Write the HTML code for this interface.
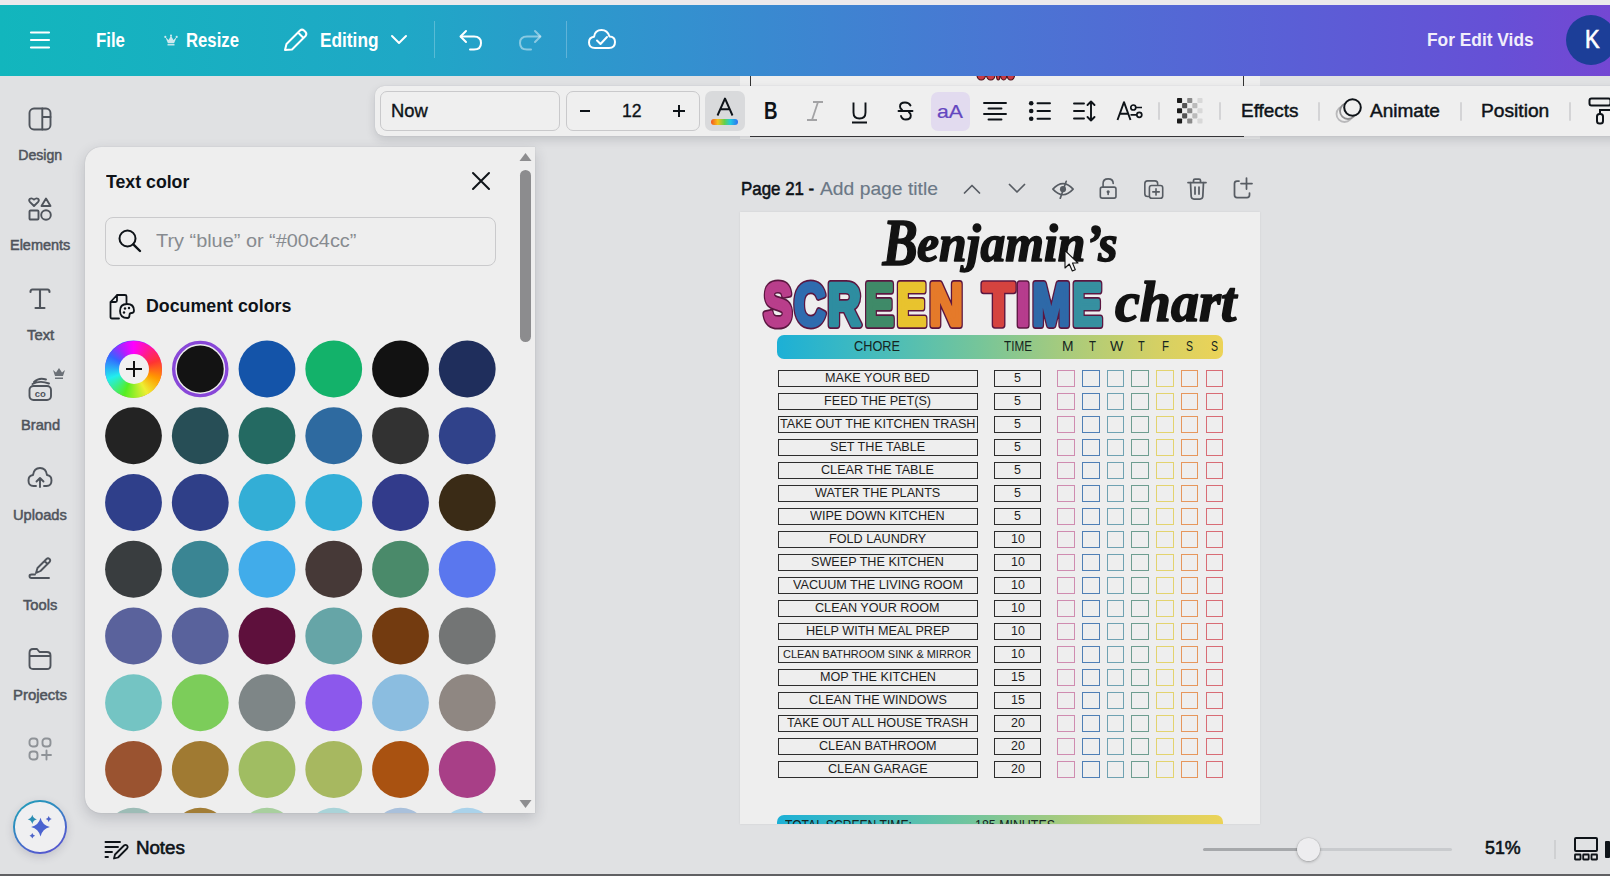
<!DOCTYPE html><html><head><meta charset="utf-8"><style>
html,body{margin:0;padding:0}
body{width:1610px;height:876px;overflow:hidden;position:relative;background:#e0e1e3;font-family:"Liberation Sans",sans-serif}
.a{position:absolute}
.t{position:absolute;white-space:pre;line-height:1;transform-origin:0 0}
</style></head><body>
<div class="a" style="left:0px;top:0px;width:1610px;height:5px;background:#ebe9ec"></div>
<div class="a" style="left:0px;top:5px;width:1610px;height:71px;background:linear-gradient(90deg,#12b6bd 0%,#1fa8c6 25%,#3391cf 42%,#4a76d3 62%,#5a5fd6 80%,#6650d6 93%,#7447d3 100%)"></div>
<svg class="a" style="left:28px;top:28px;" width="24" height="24" viewBox="0 0 24 24" fill="none"><path d="M3 4.5h18M3 12h18M3 19.5h18" stroke="#fff" stroke-width="2.2" stroke-linecap="round"/></svg>
<div class="t" style="left:96.00px;top:29.90px;font-size:20.20px;font-weight:700;color:#ffffff;transform:scaleX(0.8321);">File</div>
<svg class="a" style="left:164px;top:33.5px;" width="14" height="12.5" viewBox="0 0 14 12.5" fill="none"><g transform="scale(.875,.875)"><path d="M1.5 3.5 L4.5 10.5 H11.5 L14.5 3.5 L10.8 6.8 L8 2 L5.2 6.8 Z" fill="#cde9ee"/><rect x="4" y="11.5" width="8" height="1.6" fill="#cde9ee"/><circle cx="1.5" cy="3.3" r="1.2" fill="#cde9ee"/><circle cx="14.5" cy="3.3" r="1.2" fill="#cde9ee"/><circle cx="8" cy="1.8" r="1.2" fill="#cde9ee"/></g></svg>
<div class="t" style="left:186.00px;top:29.90px;font-size:20.20px;font-weight:700;color:#ffffff;transform:scaleX(0.8275);">Resize</div>
<svg class="a" style="left:281px;top:27px;" width="28" height="26" viewBox="0 0 28 26" fill="none"><path d="M4 23 L5.5 17 L19 3.5 Q21 1.8 23 3.5 L24.5 5 Q26.2 7 24.5 9 L11 22.5 Z M17 5.5 L22.5 11" stroke="#fff" stroke-width="2" stroke-linejoin="round"/></svg>
<div class="t" style="left:320.00px;top:29.90px;font-size:20.20px;font-weight:700;color:#ffffff;transform:scaleX(0.8556);">Editing</div>
<svg class="a" style="left:389px;top:32px;" width="20" height="14" viewBox="0 0 20 14" fill="none"><path d="M3 4 L10 11 L17 4" stroke="#fff" stroke-width="2" stroke-linecap="round" stroke-linejoin="round"/></svg>
<div class="a" style="left:434px;top:21px;width:1px;height:37px;background:rgba(255,255,255,.25)"></div>
<svg class="a" style="left:457px;top:27px;" width="28" height="26" viewBox="0 0 28 26" fill="none"><path d="M9 4 L3.5 9.5 L9 15" stroke="#fff" stroke-width="2" stroke-linecap="round" stroke-linejoin="round"/><path d="M4 9.5 H17 Q24 9.5 24 16 Q24 22.5 17 22.5 H13" stroke="#fff" stroke-width="2" stroke-linecap="round"/></svg>
<svg class="a" style="left:516px;top:27px;" width="28" height="26" viewBox="0 0 28 26" fill="none"><path d="M19 4 L24.5 9.5 L19 15" stroke="rgba(255,255,255,.45)" stroke-width="2" stroke-linecap="round" stroke-linejoin="round"/><path d="M24 9.5 H11 Q4 9.5 4 16 Q4 22.5 11 22.5 H15" stroke="rgba(255,255,255,.45)" stroke-width="2" stroke-linecap="round"/></svg>
<div class="a" style="left:566px;top:21px;width:1px;height:37px;background:rgba(255,255,255,.25)"></div>
<svg class="a" style="left:587px;top:27px;" width="30" height="24" viewBox="0 0 30 24" fill="none"><path d="M8 21 H22 Q28 21 28 15 Q28 9.5 22.5 9.5 Q20.5 3 14.5 3 Q8 3 7 9.8 Q2 10.5 2 15.5 Q2 21 8 21 Z" stroke="#fff" stroke-width="2" stroke-linejoin="round"/><path d="M10 13.5 L13.5 17 L20 10" stroke="#fff" stroke-width="2" stroke-linecap="round" stroke-linejoin="round"/></svg>
<div class="t" style="left:1427.00px;top:31.01px;font-size:18.90px;font-weight:700;color:#f1eefb;transform:scaleX(0.9182);">For Edit Vids</div>
<div class="a" style="left:1566px;top:15px;width:50px;height:50px;border-radius:50%;background:#1c3e98"></div>
<div class="t" style="left:1584.50px;top:26.97px;font-size:25.44px;font-weight:400;color:#ffffff;transform:scaleX(0.8572);-webkit-text-stroke:.7px #fff;">K</div>
<div class="t" style="left:18.30px;top:148.37px;font-size:14.10px;font-weight:400;color:#4f545c;-webkit-text-stroke:.5px #4f545c;">Design</div>
<div class="t" style="left:10.00px;top:238.37px;font-size:14.10px;font-weight:400;color:#4f545c;transform:scaleX(1.0256);-webkit-text-stroke:.5px #4f545c;">Elements</div>
<div class="t" style="left:26.60px;top:328.37px;font-size:14.10px;font-weight:400;color:#4f545c;transform:scaleX(1.0514);-webkit-text-stroke:.5px #4f545c;">Text</div>
<div class="t" style="left:20.80px;top:418.37px;font-size:14.10px;font-weight:400;color:#4f545c;transform:scaleX(1.0413);-webkit-text-stroke:.5px #4f545c;">Brand</div>
<div class="t" style="left:13.20px;top:508.37px;font-size:14.10px;font-weight:400;color:#4f545c;transform:scaleX(1.0417);-webkit-text-stroke:.5px #4f545c;">Uploads</div>
<div class="t" style="left:23.00px;top:598.37px;font-size:14.10px;font-weight:400;color:#4f545c;transform:scaleX(1.0419);-webkit-text-stroke:.5px #4f545c;">Tools</div>
<div class="t" style="left:13.40px;top:688.37px;font-size:14.10px;font-weight:400;color:#4f545c;transform:scaleX(1.0590);-webkit-text-stroke:.5px #4f545c;">Projects</div>
<svg class="a" style="left:28px;top:107px;" width="24" height="24" viewBox="0 0 24 24" fill="none"><rect x="1.5" y="1.5" width="21" height="21" rx="4.5" stroke="#4f545c" stroke-width="1.9" stroke-linecap="round" stroke-linejoin="round"/><path d="M14.3 1.5 V22.5 M14.3 10 H22.5" stroke="#4f545c" stroke-width="1.9" stroke-linecap="round" stroke-linejoin="round"/></svg>
<svg class="a" style="left:28px;top:197px;" width="24" height="25" viewBox="0 0 24 25" fill="none"><path d="M6 9 L1.8 4.8 Q0.5 3 2 1.8 Q3.8 0.6 6 2.6 Q8.2 0.6 10 1.8 Q11.5 3 10.2 4.8 Z" stroke="#4f545c" stroke-width="1.9" stroke-linecap="round" stroke-linejoin="round"/><path d="M18 1.5 L22.5 9 H13.5 Z" stroke="#4f545c" stroke-width="1.9" stroke-linecap="round" stroke-linejoin="round"/><rect x="1.5" y="13.5" width="9" height="9" rx="1" stroke="#4f545c" stroke-width="1.9" stroke-linecap="round" stroke-linejoin="round"/><circle cx="18" cy="18" r="4.8" stroke="#4f545c" stroke-width="1.9" stroke-linecap="round" stroke-linejoin="round"/></svg>
<svg class="a" style="left:28px;top:287px;" width="24" height="24" viewBox="0 0 24 24" fill="none"><path d="M2.5 5 Q2.5 2.5 4.5 2.5 H19.5 Q21.5 2.5 21.5 5 M12 2.5 V21 M7.5 21 H16.5" stroke="#4f545c" stroke-width="2.1" stroke-linecap="round"/></svg>
<svg class="a" style="left:27px;top:366px;" width="40" height="36" viewBox="0 0 40 36" fill="none"><rect x="2.5" y="20" width="21.5" height="14" rx="4" stroke="#4f545c" stroke-width="1.9" stroke-linecap="round" stroke-linejoin="round"/><path d="M7 16 Q12 11 19 13.5 M5.5 18 Q13 14 22 17.5" stroke="#4f545c" stroke-width="1.9" stroke-linecap="round" stroke-linejoin="round"/><text x="13.2" y="31" font-family="Liberation Sans" font-weight="700" font-size="9.5" fill="#4f545c" text-anchor="middle">co</text><path d="M26 4 L28 10 H36 L38 4 L35 6.5 L32 2 L29 6.5 Z" fill="#6b7077"/><rect x="28" y="11.5" width="8" height="1.5" fill="#6b7077"/></svg>
<svg class="a" style="left:27px;top:466px;" width="26" height="24" viewBox="0 0 26 24" fill="none"><path d="M9 20 H6.5 Q1.5 20 1.5 14.5 Q1.5 9.5 6 9 Q7 2 13 2 Q19 2 20 9 Q24.5 9.5 24.5 14.5 Q24.5 20 19.5 20 H17" stroke="#4f545c" stroke-width="1.9" stroke-linecap="round" stroke-linejoin="round"/><path d="M13 21 V12 M9.5 15.5 L13 12 L16.5 15.5" stroke="#4f545c" stroke-width="1.9" stroke-linecap="round" stroke-linejoin="round"/></svg>
<svg class="a" style="left:28px;top:556px;" width="24" height="25" viewBox="0 0 24 25" fill="none"><path d="M8 17 L9.5 12 L18.5 3 Q20 1.7 21.5 3 Q22.9 4.5 21.5 6 L12.5 15 Z M16.5 5 L19.5 8" stroke="#4f545c" stroke-width="1.9" stroke-linecap="round" stroke-linejoin="round"/><path d="M7 18.5 H3.5 Q1.5 18.5 1.5 20 Q1.5 22 3.5 22 H21" stroke="#4f545c" stroke-width="1.9" stroke-linecap="round" stroke-linejoin="round"/></svg>
<svg class="a" style="left:28px;top:647px;" width="24" height="24" viewBox="0 0 24 24" fill="none"><path d="M1.5 6 Q1.5 2 5 2 H9 L11.5 5 H19 Q22.5 5 22.5 8.5 V18.5 Q22.5 22 19 22 H5 Q1.5 22 1.5 18.5 Z M1.5 9 H22.5" stroke="#4f545c" stroke-width="1.9" stroke-linecap="round" stroke-linejoin="round"/></svg>
<svg class="a" style="left:28px;top:737px;" width="24" height="24" viewBox="0 0 24 24" fill="none"><rect x="1.5" y="1.5" width="8" height="8" rx="3" stroke="#8e9297" stroke-width="1.9" stroke-linecap="round"/><rect x="14.5" y="1.5" width="8" height="8" rx="3" stroke="#8e9297" stroke-width="1.9" stroke-linecap="round"/><rect x="1.5" y="14.5" width="8" height="8" rx="3" stroke="#8e9297" stroke-width="1.9" stroke-linecap="round"/><path d="M18.5 13.5 V22.5 M14 18 H23" stroke="#8e9297" stroke-width="1.9" stroke-linecap="round"/></svg>
<div class="a" style="left:13px;top:800px;width:54px;height:54px;border-radius:50%;background:linear-gradient(150deg,#1f9fb8 0%,#2f8bc0 35%,#4a66cc 65%,#5b4fd0 100%);box-shadow:0 3px 9px rgba(60,60,90,.18)"></div>
<div class="a" style="left:15.2px;top:802.2px;width:49.6px;height:49.6px;border-radius:50%;background:#efeff1"></div>
<svg class="a" style="left:25px;top:812px;" width="31" height="31" viewBox="0 0 31 31" fill="none"><path d="M15.5 5.699999999999999 Q17.38 13.219999999999999 24.9 15.1 Q17.38 16.98 15.5 24.5 Q13.62 16.98 6.1 15.1 Q13.62 13.219999999999999 15.5 5.699999999999999 Z" fill="#4a62d0"/><path d="M7.3 2.7 Q8.219999999999999 6.38 11.899999999999999 7.3 Q8.219999999999999 8.219999999999999 7.3 11.899999999999999 Q6.38 8.219999999999999 2.7 7.3 Q6.38 6.38 7.3 2.7 Z" fill="#2a8db3"/><path d="M23.7 3.9000000000000004 Q24.3 6.300000000000001 26.7 6.9 Q24.3 7.5 23.7 9.9 Q23.099999999999998 7.5 20.7 6.9 Q23.099999999999998 6.300000000000001 23.7 3.9000000000000004 Z" fill="#4d63c9"/><path d="M7.3 20.9 Q7.859999999999999 23.14 10.1 23.7 Q7.859999999999999 24.259999999999998 7.3 26.5 Q6.74 24.259999999999998 4.5 23.7 Q6.74 23.14 7.3 20.9 Z" fill="#4d63c9"/></svg>
<div class="a" style="left:740px;top:76px;width:520px;height:63px;background:#eeeeee"></div>
<div class="a" style="left:750px;top:76px;width:1.2px;height:60px;background:#333"></div>
<div class="a" style="left:1242.8px;top:76px;width:1.2px;height:60px;background:#333"></div>
<div class="a" style="left:750px;top:136px;width:493.5px;height:1px;background:#3a3a3a"></div>
<svg class="a" style="left:970px;top:76px" width="50" height="6" viewBox="0 0 50 6"><ellipse cx="11.25" cy="-1" rx="4.25" ry="5" fill="#c93a44" stroke="#4a1018" stroke-width="1.2"/><ellipse cx="20.75" cy="-1" rx="4.25" ry="5" fill="#c93a44" stroke="#4a1018" stroke-width="1.2"/><ellipse cx="28.25" cy="-1" rx="1.75" ry="5" fill="#c93a44" stroke="#4a1018" stroke-width="1.2"/><ellipse cx="33.65" cy="-1" rx="3.15" ry="5" fill="#c93a44" stroke="#4a1018" stroke-width="1.2"/><ellipse cx="40.75" cy="-1" rx="3.75" ry="5" fill="#c93a44" stroke="#4a1018" stroke-width="1.2"/></svg>
<div class="t" style="left:741.20px;top:181.47px;font-size:17.88px;font-weight:400;color:#0e1318;transform:scaleX(0.9458);-webkit-text-stroke:.55px #0e1318;">Page 21 -</div>
<div class="t" style="left:820.00px;top:181.47px;font-size:17.88px;font-weight:400;color:#6b7886;transform:scaleX(1.0794);-webkit-text-stroke:.15px #6b7886;">Add page title</div>
<svg class="a" style="left:962px;top:182px;" width="20" height="14" viewBox="0 0 20 14" fill="none"><path d="M2.5 11 L10 3.5 L17.5 11" stroke="#575c63" stroke-width="1.75" stroke-linecap="round" stroke-linejoin="round"/></svg>
<svg class="a" style="left:1007px;top:181px;" width="20" height="14" viewBox="0 0 20 14" fill="none"><path d="M2.5 3.5 L10 11 L17.5 3.5" stroke="#575c63" stroke-width="1.75" stroke-linecap="round" stroke-linejoin="round"/></svg>
<svg class="a" style="left:1051px;top:179px;" width="24" height="20.3" viewBox="0 0 26 22" fill="none"><path d="M2 11 Q13 -1 24 11 Q13 23 2 11 Z" stroke="#575c63" stroke-width="1.75" stroke-linecap="round" stroke-linejoin="round"/><circle cx="13" cy="11" r="3.3" fill="#575c63"/><path d="M16.5 2.5 L10 21" stroke="#575c63" stroke-width="1.75" stroke-linecap="round" stroke-linejoin="round"/></svg>
<svg class="a" style="left:1098px;top:177px;" width="20.3" height="23" viewBox="0 0 22 25" fill="none"><rect x="2.5" y="11" width="17" height="12" rx="2" stroke="#575c63" stroke-width="1.75" stroke-linecap="round" stroke-linejoin="round"/><path d="M5.5 11 V7 Q5.5 2 11 2 Q16.5 2 16.5 7" stroke="#575c63" stroke-width="1.75" stroke-linecap="round" stroke-linejoin="round"/><circle cx="11" cy="16" r="1.7" fill="#575c63"/><path d="M11 16 V19" stroke="#575c63" stroke-width="1.75" stroke-linecap="round" stroke-linejoin="round"/></svg>
<svg class="a" style="left:1142.5px;top:179px;" width="22" height="21.2" viewBox="0 0 24 23" fill="none"><path d="M6 19 H5 Q2 19 2 16 V5 Q2 2 5 2 H13 Q16 2 16 5 V6" stroke="#575c63" stroke-width="1.75" stroke-linecap="round" stroke-linejoin="round"/><rect x="7" y="7" width="14.5" height="14" rx="2.5" stroke="#575c63" stroke-width="1.75" stroke-linecap="round" stroke-linejoin="round"/><path d="M14.2 10.5 V17.5 M10.7 14 H17.7" stroke="#575c63" stroke-width="1.75" stroke-linecap="round" stroke-linejoin="round"/></svg>
<svg class="a" style="left:1186px;top:177px;" width="22" height="24" viewBox="0 0 22 24" fill="none"><path d="M2 5.5 H20 M7.5 5.5 V3.5 Q7.5 2 9 2 H13 Q14.5 2 14.5 3.5 V5.5 M4.5 5.5 L5.2 19.5 Q5.5 22 8 22 H14 Q16.5 22 16.8 19.5 L17.5 5.5 M9 10 V17 M13 10 V17" stroke="#575c63" stroke-width="1.75" stroke-linecap="round" stroke-linejoin="round"/></svg>
<svg class="a" style="left:1232px;top:176px;" width="22" height="24" viewBox="0 0 22 24" fill="none"><path d="M7 5 H5 Q2.5 5 2.5 7.5 V19 Q2.5 21.5 5 21.5 H15 Q17.5 21.5 17.5 19 V17 M14.5 2 V13 M9 7.5 H20" stroke="#575c63" stroke-width="1.75" stroke-linecap="round" stroke-linejoin="round"/></svg>
<div class="a" style="left:740px;top:212px;width:520px;height:611.5px;background:#eeeeee;box-shadow:0 0 2px rgba(0,0,0,.08)"></div>
<svg class="a" style="left:0;top:0" width="1300" height="340" viewBox="0 0 1300 340"><text transform="translate(882.5,265) scale(0.77,1)" font-family="Liberation Serif" font-style="italic" font-weight="700" fill="#121212" stroke="#121212" stroke-width="1.6" stroke-linejoin="round" font-size="68.7">B</text><text transform="translate(917,260.5) scale(0.95,1)" font-family="Liberation Serif" font-style="italic" font-weight="700" fill="#121212" stroke="#121212" stroke-width="1.6" stroke-linejoin="round" font-size="52.3">enjamin’s</text><text transform="translate(1115,321) scale(0.99,1)" font-family="Liberation Serif" font-style="italic" font-weight="700" fill="#121212" stroke="#121212" stroke-width="1.6" stroke-linejoin="round" font-size="56.6">chart</text></svg>
<svg class="a" style="left:750px;top:0px" width="380" height="340" viewBox="0 0 380 340"><text transform="translate(14.00,325.00) scale(0.702,1)" font-family="Liberation Sans" font-weight="700" font-size="59.6" fill="#b93e8b" stroke="#5b1640" stroke-width="7.0" vector-effect="non-scaling-stroke" stroke-linejoin="round">S</text><text transform="translate(14.00,325.00) scale(0.702,1)" font-family="Liberation Sans" font-weight="700" font-size="59.6" fill="#b93e8b" stroke="#b93e8b" stroke-width="4.0" vector-effect="non-scaling-stroke" stroke-linejoin="round">S</text><text transform="translate(44.20,325.00) scale(0.722,1)" font-family="Liberation Sans" font-weight="700" font-size="59.6" fill="#2f6caf" stroke="#5b1640" stroke-width="7.0" vector-effect="non-scaling-stroke" stroke-linejoin="round">C</text><text transform="translate(44.20,325.00) scale(0.722,1)" font-family="Liberation Sans" font-weight="700" font-size="59.6" fill="#2f6caf" stroke="#2f6caf" stroke-width="4.0" vector-effect="non-scaling-stroke" stroke-linejoin="round">C</text><text transform="translate(77.60,325.00) scale(0.774,1)" font-family="Liberation Sans" font-weight="700" font-size="59.6" fill="#2e8da0" stroke="#5b1640" stroke-width="7.0" vector-effect="non-scaling-stroke" stroke-linejoin="round">R</text><text transform="translate(77.60,325.00) scale(0.774,1)" font-family="Liberation Sans" font-weight="700" font-size="59.6" fill="#2e8da0" stroke="#2e8da0" stroke-width="4.0" vector-effect="non-scaling-stroke" stroke-linejoin="round">R</text><text transform="translate(114.90,325.00) scale(0.722,1)" font-family="Liberation Sans" font-weight="700" font-size="59.6" fill="#3f8a68" stroke="#5b1640" stroke-width="7.0" vector-effect="non-scaling-stroke" stroke-linejoin="round">E</text><text transform="translate(114.90,325.00) scale(0.722,1)" font-family="Liberation Sans" font-weight="700" font-size="59.6" fill="#3f8a68" stroke="#3f8a68" stroke-width="4.0" vector-effect="non-scaling-stroke" stroke-linejoin="round">E</text><text transform="translate(146.70,325.00) scale(0.744,1)" font-family="Liberation Sans" font-weight="700" font-size="59.6" fill="#e8c32e" stroke="#5b1640" stroke-width="7.0" vector-effect="non-scaling-stroke" stroke-linejoin="round">E</text><text transform="translate(146.70,325.00) scale(0.744,1)" font-family="Liberation Sans" font-weight="700" font-size="59.6" fill="#e8c32e" stroke="#e8c32e" stroke-width="4.0" vector-effect="non-scaling-stroke" stroke-linejoin="round">E</text><text transform="translate(179.20,325.00) scale(0.783,1)" font-family="Liberation Sans" font-weight="700" font-size="59.6" fill="#e57a2a" stroke="#5b1640" stroke-width="7.0" vector-effect="non-scaling-stroke" stroke-linejoin="round">N</text><text transform="translate(179.20,325.00) scale(0.783,1)" font-family="Liberation Sans" font-weight="700" font-size="59.6" fill="#e57a2a" stroke="#e57a2a" stroke-width="4.0" vector-effect="non-scaling-stroke" stroke-linejoin="round">N</text><text transform="translate(232.90,325.00) scale(0.856,1)" font-family="Liberation Sans" font-weight="700" font-size="59.6" fill="#d5433f" stroke="#5b1640" stroke-width="7.0" vector-effect="non-scaling-stroke" stroke-linejoin="round">T</text><text transform="translate(232.90,325.00) scale(0.856,1)" font-family="Liberation Sans" font-weight="700" font-size="59.6" fill="#d5433f" stroke="#d5433f" stroke-width="4.0" vector-effect="non-scaling-stroke" stroke-linejoin="round">T</text><text transform="translate(266.40,325.00) scale(0.803,1)" font-family="Liberation Sans" font-weight="700" font-size="59.6" fill="#b63c8d" stroke="#5b1640" stroke-width="7.0" vector-effect="non-scaling-stroke" stroke-linejoin="round">I</text><text transform="translate(266.40,325.00) scale(0.803,1)" font-family="Liberation Sans" font-weight="700" font-size="59.6" fill="#b63c8d" stroke="#b63c8d" stroke-width="4.0" vector-effect="non-scaling-stroke" stroke-linejoin="round">I</text><text transform="translate(282.20,325.00) scale(0.764,1)" font-family="Liberation Sans" font-weight="700" font-size="59.6" fill="#2e69a8" stroke="#5b1640" stroke-width="7.0" vector-effect="non-scaling-stroke" stroke-linejoin="round">M</text><text transform="translate(282.20,325.00) scale(0.764,1)" font-family="Liberation Sans" font-weight="700" font-size="59.6" fill="#2e69a8" stroke="#2e69a8" stroke-width="4.0" vector-effect="non-scaling-stroke" stroke-linejoin="round">M</text><text transform="translate(322.60,325.00) scale(0.744,1)" font-family="Liberation Sans" font-weight="700" font-size="59.6" fill="#3690a0" stroke="#5b1640" stroke-width="7.0" vector-effect="non-scaling-stroke" stroke-linejoin="round">E</text><text transform="translate(322.60,325.00) scale(0.744,1)" font-family="Liberation Sans" font-weight="700" font-size="59.6" fill="#3690a0" stroke="#3690a0" stroke-width="4.0" vector-effect="non-scaling-stroke" stroke-linejoin="round">E</text></svg>
<div class="a" style="left:776.5px;top:335px;width:446.5px;height:23.5px;background:linear-gradient(90deg,#1cb0d6 0%,#4bbdb8 25%,#75c59a 45%,#a8cb7c 65%,#d4d064 85%,#ecd357 100%);border-radius:7px"></div>
<div class="t" style="left:854.00px;top:340.19px;font-size:13.95px;font-weight:400;color:#15251f;transform:scaleX(0.9132);">CHORE</div>
<div class="t" style="left:1004.00px;top:340.19px;font-size:13.95px;font-weight:400;color:#15251f;transform:scaleX(0.8396);">TIME</div>
<div class="t" style="left:1061.50px;top:340.19px;font-size:13.95px;font-weight:400;color:#15251f;transform:scaleX(0.9870);">M</div>
<div class="t" style="left:1088.70px;top:340.19px;font-size:13.95px;font-weight:400;color:#15251f;transform:scaleX(0.8224);">T</div>
<div class="t" style="left:1109.70px;top:340.19px;font-size:13.95px;font-weight:400;color:#15251f;transform:scaleX(1.0086);">W</div>
<div class="t" style="left:1137.60px;top:340.19px;font-size:13.95px;font-weight:400;color:#15251f;transform:scaleX(0.7872);">T</div>
<div class="t" style="left:1161.70px;top:340.19px;font-size:13.95px;font-weight:400;color:#15251f;transform:scaleX(0.8224);">F</div>
<div class="t" style="left:1185.70px;top:340.19px;font-size:13.95px;font-weight:400;color:#15251f;transform:scaleX(0.7544);">S</div>
<div class="t" style="left:1210.60px;top:340.19px;font-size:13.95px;font-weight:400;color:#15251f;transform:scaleX(0.7544);">S</div>
<div class="a" style="left:777.6px;top:369.5px;width:200.7px;height:17.2px;border:1.7px solid #2d2d2d;box-sizing:border-box"></div>
<div class="a" style="left:994px;top:369.5px;width:47px;height:17.2px;border:1.7px solid #2d2d2d;box-sizing:border-box"></div>
<div class="t" style="left:825.02px;top:371.03px;font-size:13.08px;font-weight:400;color:#1d1d1d;transform:scaleX(0.9650);">MAKE YOUR BED</div>
<div class="t" style="left:1014.05px;top:371.03px;font-size:13.08px;font-weight:400;color:#1d1d1d;transform:scaleX(0.9514);">5</div>
<div class="a" style="left:1057.3px;top:369.5px;width:17.5px;height:17.5px;border:1.6px solid #cf8cb0;box-sizing:border-box"></div>
<div class="a" style="left:1082.0px;top:369.5px;width:17.5px;height:17.5px;border:1.6px solid #4f7fb5;box-sizing:border-box"></div>
<div class="a" style="left:1106.7px;top:369.5px;width:17.5px;height:17.5px;border:1.6px solid #6fa2b2;box-sizing:border-box"></div>
<div class="a" style="left:1131.4px;top:369.5px;width:17.5px;height:17.5px;border:1.6px solid #6e9d90;box-sizing:border-box"></div>
<div class="a" style="left:1156.1px;top:369.5px;width:17.5px;height:17.5px;border:1.6px solid #e3d36e;box-sizing:border-box"></div>
<div class="a" style="left:1180.8px;top:369.5px;width:17.5px;height:17.5px;border:1.6px solid #e6975c;box-sizing:border-box"></div>
<div class="a" style="left:1205.5px;top:369.5px;width:17.5px;height:17.5px;border:1.6px solid #d86c75;box-sizing:border-box"></div>
<div class="a" style="left:777.6px;top:392.5px;width:200.7px;height:17.2px;border:1.7px solid #2d2d2d;box-sizing:border-box"></div>
<div class="a" style="left:994px;top:392.5px;width:47px;height:17.2px;border:1.7px solid #2d2d2d;box-sizing:border-box"></div>
<div class="t" style="left:823.94px;top:394.03px;font-size:13.08px;font-weight:400;color:#1d1d1d;transform:scaleX(0.9650);">FEED THE PET(S)</div>
<div class="t" style="left:1014.05px;top:394.03px;font-size:13.08px;font-weight:400;color:#1d1d1d;transform:scaleX(0.9514);">5</div>
<div class="a" style="left:1057.3px;top:392.5px;width:17.5px;height:17.5px;border:1.6px solid #cf8cb0;box-sizing:border-box"></div>
<div class="a" style="left:1082.0px;top:392.5px;width:17.5px;height:17.5px;border:1.6px solid #4f7fb5;box-sizing:border-box"></div>
<div class="a" style="left:1106.7px;top:392.5px;width:17.5px;height:17.5px;border:1.6px solid #6fa2b2;box-sizing:border-box"></div>
<div class="a" style="left:1131.4px;top:392.5px;width:17.5px;height:17.5px;border:1.6px solid #6e9d90;box-sizing:border-box"></div>
<div class="a" style="left:1156.1px;top:392.5px;width:17.5px;height:17.5px;border:1.6px solid #e3d36e;box-sizing:border-box"></div>
<div class="a" style="left:1180.8px;top:392.5px;width:17.5px;height:17.5px;border:1.6px solid #e6975c;box-sizing:border-box"></div>
<div class="a" style="left:1205.5px;top:392.5px;width:17.5px;height:17.5px;border:1.6px solid #d86c75;box-sizing:border-box"></div>
<div class="a" style="left:777.6px;top:415.5px;width:200.7px;height:17.2px;border:1.7px solid #2d2d2d;box-sizing:border-box"></div>
<div class="a" style="left:994px;top:415.5px;width:47px;height:17.2px;border:1.7px solid #2d2d2d;box-sizing:border-box"></div>
<div class="t" style="left:779.76px;top:417.03px;font-size:13.08px;font-weight:400;color:#1d1d1d;transform:scaleX(0.9650);">TAKE OUT THE KITCHEN TRASH</div>
<div class="t" style="left:1014.05px;top:417.03px;font-size:13.08px;font-weight:400;color:#1d1d1d;transform:scaleX(0.9514);">5</div>
<div class="a" style="left:1057.3px;top:415.5px;width:17.5px;height:17.5px;border:1.6px solid #cf8cb0;box-sizing:border-box"></div>
<div class="a" style="left:1082.0px;top:415.5px;width:17.5px;height:17.5px;border:1.6px solid #4f7fb5;box-sizing:border-box"></div>
<div class="a" style="left:1106.7px;top:415.5px;width:17.5px;height:17.5px;border:1.6px solid #6fa2b2;box-sizing:border-box"></div>
<div class="a" style="left:1131.4px;top:415.5px;width:17.5px;height:17.5px;border:1.6px solid #6e9d90;box-sizing:border-box"></div>
<div class="a" style="left:1156.1px;top:415.5px;width:17.5px;height:17.5px;border:1.6px solid #e3d36e;box-sizing:border-box"></div>
<div class="a" style="left:1180.8px;top:415.5px;width:17.5px;height:17.5px;border:1.6px solid #e6975c;box-sizing:border-box"></div>
<div class="a" style="left:1205.5px;top:415.5px;width:17.5px;height:17.5px;border:1.6px solid #d86c75;box-sizing:border-box"></div>
<div class="a" style="left:777.6px;top:438.5px;width:200.7px;height:17.2px;border:1.7px solid #2d2d2d;box-sizing:border-box"></div>
<div class="a" style="left:994px;top:438.5px;width:47px;height:17.2px;border:1.7px solid #2d2d2d;box-sizing:border-box"></div>
<div class="t" style="left:829.91px;top:440.03px;font-size:13.08px;font-weight:400;color:#1d1d1d;transform:scaleX(0.9650);">SET THE TABLE</div>
<div class="t" style="left:1014.05px;top:440.03px;font-size:13.08px;font-weight:400;color:#1d1d1d;transform:scaleX(0.9514);">5</div>
<div class="a" style="left:1057.3px;top:438.5px;width:17.5px;height:17.5px;border:1.6px solid #cf8cb0;box-sizing:border-box"></div>
<div class="a" style="left:1082.0px;top:438.5px;width:17.5px;height:17.5px;border:1.6px solid #4f7fb5;box-sizing:border-box"></div>
<div class="a" style="left:1106.7px;top:438.5px;width:17.5px;height:17.5px;border:1.6px solid #6fa2b2;box-sizing:border-box"></div>
<div class="a" style="left:1131.4px;top:438.5px;width:17.5px;height:17.5px;border:1.6px solid #6e9d90;box-sizing:border-box"></div>
<div class="a" style="left:1156.1px;top:438.5px;width:17.5px;height:17.5px;border:1.6px solid #e3d36e;box-sizing:border-box"></div>
<div class="a" style="left:1180.8px;top:438.5px;width:17.5px;height:17.5px;border:1.6px solid #e6975c;box-sizing:border-box"></div>
<div class="a" style="left:1205.5px;top:438.5px;width:17.5px;height:17.5px;border:1.6px solid #d86c75;box-sizing:border-box"></div>
<div class="a" style="left:777.6px;top:461.5px;width:200.7px;height:17.2px;border:1.7px solid #2d2d2d;box-sizing:border-box"></div>
<div class="a" style="left:994px;top:461.5px;width:47px;height:17.2px;border:1.7px solid #2d2d2d;box-sizing:border-box"></div>
<div class="t" style="left:821.01px;top:463.03px;font-size:13.08px;font-weight:400;color:#1d1d1d;transform:scaleX(0.9650);">CLEAR THE TABLE</div>
<div class="t" style="left:1014.05px;top:463.03px;font-size:13.08px;font-weight:400;color:#1d1d1d;transform:scaleX(0.9514);">5</div>
<div class="a" style="left:1057.3px;top:461.5px;width:17.5px;height:17.5px;border:1.6px solid #cf8cb0;box-sizing:border-box"></div>
<div class="a" style="left:1082.0px;top:461.5px;width:17.5px;height:17.5px;border:1.6px solid #4f7fb5;box-sizing:border-box"></div>
<div class="a" style="left:1106.7px;top:461.5px;width:17.5px;height:17.5px;border:1.6px solid #6fa2b2;box-sizing:border-box"></div>
<div class="a" style="left:1131.4px;top:461.5px;width:17.5px;height:17.5px;border:1.6px solid #6e9d90;box-sizing:border-box"></div>
<div class="a" style="left:1156.1px;top:461.5px;width:17.5px;height:17.5px;border:1.6px solid #e3d36e;box-sizing:border-box"></div>
<div class="a" style="left:1180.8px;top:461.5px;width:17.5px;height:17.5px;border:1.6px solid #e6975c;box-sizing:border-box"></div>
<div class="a" style="left:1205.5px;top:461.5px;width:17.5px;height:17.5px;border:1.6px solid #d86c75;box-sizing:border-box"></div>
<div class="a" style="left:777.6px;top:484.5px;width:200.7px;height:17.2px;border:1.7px solid #2d2d2d;box-sizing:border-box"></div>
<div class="a" style="left:994px;top:484.5px;width:47px;height:17.2px;border:1.7px solid #2d2d2d;box-sizing:border-box"></div>
<div class="t" style="left:814.82px;top:486.03px;font-size:13.08px;font-weight:400;color:#1d1d1d;transform:scaleX(0.9650);">WATER THE PLANTS</div>
<div class="t" style="left:1014.05px;top:486.03px;font-size:13.08px;font-weight:400;color:#1d1d1d;transform:scaleX(0.9514);">5</div>
<div class="a" style="left:1057.3px;top:484.5px;width:17.5px;height:17.5px;border:1.6px solid #cf8cb0;box-sizing:border-box"></div>
<div class="a" style="left:1082.0px;top:484.5px;width:17.5px;height:17.5px;border:1.6px solid #4f7fb5;box-sizing:border-box"></div>
<div class="a" style="left:1106.7px;top:484.5px;width:17.5px;height:17.5px;border:1.6px solid #6fa2b2;box-sizing:border-box"></div>
<div class="a" style="left:1131.4px;top:484.5px;width:17.5px;height:17.5px;border:1.6px solid #6e9d90;box-sizing:border-box"></div>
<div class="a" style="left:1156.1px;top:484.5px;width:17.5px;height:17.5px;border:1.6px solid #e3d36e;box-sizing:border-box"></div>
<div class="a" style="left:1180.8px;top:484.5px;width:17.5px;height:17.5px;border:1.6px solid #e6975c;box-sizing:border-box"></div>
<div class="a" style="left:1205.5px;top:484.5px;width:17.5px;height:17.5px;border:1.6px solid #d86c75;box-sizing:border-box"></div>
<div class="a" style="left:777.6px;top:507.5px;width:200.7px;height:17.2px;border:1.7px solid #2d2d2d;box-sizing:border-box"></div>
<div class="a" style="left:994px;top:507.5px;width:47px;height:17.2px;border:1.7px solid #2d2d2d;box-sizing:border-box"></div>
<div class="t" style="left:810.18px;top:509.03px;font-size:13.08px;font-weight:400;color:#1d1d1d;transform:scaleX(0.9650);">WIPE DOWN KITCHEN</div>
<div class="t" style="left:1014.05px;top:509.03px;font-size:13.08px;font-weight:400;color:#1d1d1d;transform:scaleX(0.9514);">5</div>
<div class="a" style="left:1057.3px;top:507.5px;width:17.5px;height:17.5px;border:1.6px solid #cf8cb0;box-sizing:border-box"></div>
<div class="a" style="left:1082.0px;top:507.5px;width:17.5px;height:17.5px;border:1.6px solid #4f7fb5;box-sizing:border-box"></div>
<div class="a" style="left:1106.7px;top:507.5px;width:17.5px;height:17.5px;border:1.6px solid #6fa2b2;box-sizing:border-box"></div>
<div class="a" style="left:1131.4px;top:507.5px;width:17.5px;height:17.5px;border:1.6px solid #6e9d90;box-sizing:border-box"></div>
<div class="a" style="left:1156.1px;top:507.5px;width:17.5px;height:17.5px;border:1.6px solid #e3d36e;box-sizing:border-box"></div>
<div class="a" style="left:1180.8px;top:507.5px;width:17.5px;height:17.5px;border:1.6px solid #e6975c;box-sizing:border-box"></div>
<div class="a" style="left:1205.5px;top:507.5px;width:17.5px;height:17.5px;border:1.6px solid #d86c75;box-sizing:border-box"></div>
<div class="a" style="left:777.6px;top:530.5px;width:200.7px;height:17.2px;border:1.7px solid #2d2d2d;box-sizing:border-box"></div>
<div class="a" style="left:994px;top:530.5px;width:47px;height:17.2px;border:1.7px solid #2d2d2d;box-sizing:border-box"></div>
<div class="t" style="left:828.87px;top:532.03px;font-size:13.08px;font-weight:400;color:#1d1d1d;transform:scaleX(0.9650);">FOLD LAUNDRY</div>
<div class="t" style="left:1010.59px;top:532.03px;font-size:13.08px;font-weight:400;color:#1d1d1d;transform:scaleX(0.9514);">10</div>
<div class="a" style="left:1057.3px;top:530.5px;width:17.5px;height:17.5px;border:1.6px solid #cf8cb0;box-sizing:border-box"></div>
<div class="a" style="left:1082.0px;top:530.5px;width:17.5px;height:17.5px;border:1.6px solid #4f7fb5;box-sizing:border-box"></div>
<div class="a" style="left:1106.7px;top:530.5px;width:17.5px;height:17.5px;border:1.6px solid #6fa2b2;box-sizing:border-box"></div>
<div class="a" style="left:1131.4px;top:530.5px;width:17.5px;height:17.5px;border:1.6px solid #6e9d90;box-sizing:border-box"></div>
<div class="a" style="left:1156.1px;top:530.5px;width:17.5px;height:17.5px;border:1.6px solid #e3d36e;box-sizing:border-box"></div>
<div class="a" style="left:1180.8px;top:530.5px;width:17.5px;height:17.5px;border:1.6px solid #e6975c;box-sizing:border-box"></div>
<div class="a" style="left:1205.5px;top:530.5px;width:17.5px;height:17.5px;border:1.6px solid #d86c75;box-sizing:border-box"></div>
<div class="a" style="left:777.6px;top:553.5px;width:200.7px;height:17.2px;border:1.7px solid #2d2d2d;box-sizing:border-box"></div>
<div class="a" style="left:994px;top:553.5px;width:47px;height:17.2px;border:1.7px solid #2d2d2d;box-sizing:border-box"></div>
<div class="t" style="left:811.10px;top:555.03px;font-size:13.08px;font-weight:400;color:#1d1d1d;transform:scaleX(0.9650);">SWEEP THE KITCHEN</div>
<div class="t" style="left:1010.59px;top:555.03px;font-size:13.08px;font-weight:400;color:#1d1d1d;transform:scaleX(0.9514);">10</div>
<div class="a" style="left:1057.3px;top:553.5px;width:17.5px;height:17.5px;border:1.6px solid #cf8cb0;box-sizing:border-box"></div>
<div class="a" style="left:1082.0px;top:553.5px;width:17.5px;height:17.5px;border:1.6px solid #4f7fb5;box-sizing:border-box"></div>
<div class="a" style="left:1106.7px;top:553.5px;width:17.5px;height:17.5px;border:1.6px solid #6fa2b2;box-sizing:border-box"></div>
<div class="a" style="left:1131.4px;top:553.5px;width:17.5px;height:17.5px;border:1.6px solid #6e9d90;box-sizing:border-box"></div>
<div class="a" style="left:1156.1px;top:553.5px;width:17.5px;height:17.5px;border:1.6px solid #e3d36e;box-sizing:border-box"></div>
<div class="a" style="left:1180.8px;top:553.5px;width:17.5px;height:17.5px;border:1.6px solid #e6975c;box-sizing:border-box"></div>
<div class="a" style="left:1205.5px;top:553.5px;width:17.5px;height:17.5px;border:1.6px solid #d86c75;box-sizing:border-box"></div>
<div class="a" style="left:777.6px;top:576.5px;width:200.7px;height:17.2px;border:1.7px solid #2d2d2d;box-sizing:border-box"></div>
<div class="a" style="left:994px;top:576.5px;width:47px;height:17.2px;border:1.7px solid #2d2d2d;box-sizing:border-box"></div>
<div class="t" style="left:792.51px;top:578.03px;font-size:13.08px;font-weight:400;color:#1d1d1d;transform:scaleX(0.9650);">VACUUM THE LIVING ROOM</div>
<div class="t" style="left:1010.59px;top:578.03px;font-size:13.08px;font-weight:400;color:#1d1d1d;transform:scaleX(0.9514);">10</div>
<div class="a" style="left:1057.3px;top:576.5px;width:17.5px;height:17.5px;border:1.6px solid #cf8cb0;box-sizing:border-box"></div>
<div class="a" style="left:1082.0px;top:576.5px;width:17.5px;height:17.5px;border:1.6px solid #4f7fb5;box-sizing:border-box"></div>
<div class="a" style="left:1106.7px;top:576.5px;width:17.5px;height:17.5px;border:1.6px solid #6fa2b2;box-sizing:border-box"></div>
<div class="a" style="left:1131.4px;top:576.5px;width:17.5px;height:17.5px;border:1.6px solid #6e9d90;box-sizing:border-box"></div>
<div class="a" style="left:1156.1px;top:576.5px;width:17.5px;height:17.5px;border:1.6px solid #e3d36e;box-sizing:border-box"></div>
<div class="a" style="left:1180.8px;top:576.5px;width:17.5px;height:17.5px;border:1.6px solid #e6975c;box-sizing:border-box"></div>
<div class="a" style="left:1205.5px;top:576.5px;width:17.5px;height:17.5px;border:1.6px solid #d86c75;box-sizing:border-box"></div>
<div class="a" style="left:777.6px;top:599.5px;width:200.7px;height:17.2px;border:1.7px solid #2d2d2d;box-sizing:border-box"></div>
<div class="a" style="left:994px;top:599.5px;width:47px;height:17.2px;border:1.7px solid #2d2d2d;box-sizing:border-box"></div>
<div class="t" style="left:815.20px;top:601.03px;font-size:13.08px;font-weight:400;color:#1d1d1d;transform:scaleX(0.9650);">CLEAN YOUR ROOM</div>
<div class="t" style="left:1010.59px;top:601.03px;font-size:13.08px;font-weight:400;color:#1d1d1d;transform:scaleX(0.9514);">10</div>
<div class="a" style="left:1057.3px;top:599.5px;width:17.5px;height:17.5px;border:1.6px solid #cf8cb0;box-sizing:border-box"></div>
<div class="a" style="left:1082.0px;top:599.5px;width:17.5px;height:17.5px;border:1.6px solid #4f7fb5;box-sizing:border-box"></div>
<div class="a" style="left:1106.7px;top:599.5px;width:17.5px;height:17.5px;border:1.6px solid #6fa2b2;box-sizing:border-box"></div>
<div class="a" style="left:1131.4px;top:599.5px;width:17.5px;height:17.5px;border:1.6px solid #6e9d90;box-sizing:border-box"></div>
<div class="a" style="left:1156.1px;top:599.5px;width:17.5px;height:17.5px;border:1.6px solid #e3d36e;box-sizing:border-box"></div>
<div class="a" style="left:1180.8px;top:599.5px;width:17.5px;height:17.5px;border:1.6px solid #e6975c;box-sizing:border-box"></div>
<div class="a" style="left:1205.5px;top:599.5px;width:17.5px;height:17.5px;border:1.6px solid #d86c75;box-sizing:border-box"></div>
<div class="a" style="left:777.6px;top:622.5px;width:200.7px;height:17.2px;border:1.7px solid #2d2d2d;box-sizing:border-box"></div>
<div class="a" style="left:994px;top:622.5px;width:47px;height:17.2px;border:1.7px solid #2d2d2d;box-sizing:border-box"></div>
<div class="t" style="left:805.61px;top:624.03px;font-size:13.08px;font-weight:400;color:#1d1d1d;transform:scaleX(0.9650);">HELP WITH MEAL PREP</div>
<div class="t" style="left:1010.59px;top:624.03px;font-size:13.08px;font-weight:400;color:#1d1d1d;transform:scaleX(0.9514);">10</div>
<div class="a" style="left:1057.3px;top:622.5px;width:17.5px;height:17.5px;border:1.6px solid #cf8cb0;box-sizing:border-box"></div>
<div class="a" style="left:1082.0px;top:622.5px;width:17.5px;height:17.5px;border:1.6px solid #4f7fb5;box-sizing:border-box"></div>
<div class="a" style="left:1106.7px;top:622.5px;width:17.5px;height:17.5px;border:1.6px solid #6fa2b2;box-sizing:border-box"></div>
<div class="a" style="left:1131.4px;top:622.5px;width:17.5px;height:17.5px;border:1.6px solid #6e9d90;box-sizing:border-box"></div>
<div class="a" style="left:1156.1px;top:622.5px;width:17.5px;height:17.5px;border:1.6px solid #e3d36e;box-sizing:border-box"></div>
<div class="a" style="left:1180.8px;top:622.5px;width:17.5px;height:17.5px;border:1.6px solid #e6975c;box-sizing:border-box"></div>
<div class="a" style="left:1205.5px;top:622.5px;width:17.5px;height:17.5px;border:1.6px solid #d86c75;box-sizing:border-box"></div>
<div class="a" style="left:777.6px;top:645.5px;width:200.7px;height:17.2px;border:1.7px solid #2d2d2d;box-sizing:border-box"></div>
<div class="a" style="left:994px;top:645.5px;width:47px;height:17.2px;border:1.7px solid #2d2d2d;box-sizing:border-box"></div>
<div class="t" style="left:783.39px;top:648.50px;font-size:11.34px;font-weight:400;color:#1d1d1d;transform:scaleX(0.9650);">CLEAN BATHROOM SINK & MIRROR</div>
<div class="t" style="left:1010.59px;top:647.03px;font-size:13.08px;font-weight:400;color:#1d1d1d;transform:scaleX(0.9514);">10</div>
<div class="a" style="left:1057.3px;top:645.5px;width:17.5px;height:17.5px;border:1.6px solid #cf8cb0;box-sizing:border-box"></div>
<div class="a" style="left:1082.0px;top:645.5px;width:17.5px;height:17.5px;border:1.6px solid #4f7fb5;box-sizing:border-box"></div>
<div class="a" style="left:1106.7px;top:645.5px;width:17.5px;height:17.5px;border:1.6px solid #6fa2b2;box-sizing:border-box"></div>
<div class="a" style="left:1131.4px;top:645.5px;width:17.5px;height:17.5px;border:1.6px solid #6e9d90;box-sizing:border-box"></div>
<div class="a" style="left:1156.1px;top:645.5px;width:17.5px;height:17.5px;border:1.6px solid #e3d36e;box-sizing:border-box"></div>
<div class="a" style="left:1180.8px;top:645.5px;width:17.5px;height:17.5px;border:1.6px solid #e6975c;box-sizing:border-box"></div>
<div class="a" style="left:1205.5px;top:645.5px;width:17.5px;height:17.5px;border:1.6px solid #d86c75;box-sizing:border-box"></div>
<div class="a" style="left:777.6px;top:668.5px;width:200.7px;height:17.2px;border:1.7px solid #2d2d2d;box-sizing:border-box"></div>
<div class="a" style="left:994px;top:668.5px;width:47px;height:17.2px;border:1.7px solid #2d2d2d;box-sizing:border-box"></div>
<div class="t" style="left:819.53px;top:670.03px;font-size:13.08px;font-weight:400;color:#1d1d1d;transform:scaleX(0.9650);">MOP THE KITCHEN</div>
<div class="t" style="left:1010.59px;top:670.03px;font-size:13.08px;font-weight:400;color:#1d1d1d;transform:scaleX(0.9514);">15</div>
<div class="a" style="left:1057.3px;top:668.5px;width:17.5px;height:17.5px;border:1.6px solid #cf8cb0;box-sizing:border-box"></div>
<div class="a" style="left:1082.0px;top:668.5px;width:17.5px;height:17.5px;border:1.6px solid #4f7fb5;box-sizing:border-box"></div>
<div class="a" style="left:1106.7px;top:668.5px;width:17.5px;height:17.5px;border:1.6px solid #6fa2b2;box-sizing:border-box"></div>
<div class="a" style="left:1131.4px;top:668.5px;width:17.5px;height:17.5px;border:1.6px solid #6e9d90;box-sizing:border-box"></div>
<div class="a" style="left:1156.1px;top:668.5px;width:17.5px;height:17.5px;border:1.6px solid #e3d36e;box-sizing:border-box"></div>
<div class="a" style="left:1180.8px;top:668.5px;width:17.5px;height:17.5px;border:1.6px solid #e6975c;box-sizing:border-box"></div>
<div class="a" style="left:1205.5px;top:668.5px;width:17.5px;height:17.5px;border:1.6px solid #d86c75;box-sizing:border-box"></div>
<div class="a" style="left:777.6px;top:691.5px;width:200.7px;height:17.2px;border:1.7px solid #2d2d2d;box-sizing:border-box"></div>
<div class="a" style="left:994px;top:691.5px;width:47px;height:17.2px;border:1.7px solid #2d2d2d;box-sizing:border-box"></div>
<div class="t" style="left:808.54px;top:693.03px;font-size:13.08px;font-weight:400;color:#1d1d1d;transform:scaleX(0.9650);">CLEAN THE WINDOWS</div>
<div class="t" style="left:1010.59px;top:693.03px;font-size:13.08px;font-weight:400;color:#1d1d1d;transform:scaleX(0.9514);">15</div>
<div class="a" style="left:1057.3px;top:691.5px;width:17.5px;height:17.5px;border:1.6px solid #cf8cb0;box-sizing:border-box"></div>
<div class="a" style="left:1082.0px;top:691.5px;width:17.5px;height:17.5px;border:1.6px solid #4f7fb5;box-sizing:border-box"></div>
<div class="a" style="left:1106.7px;top:691.5px;width:17.5px;height:17.5px;border:1.6px solid #6fa2b2;box-sizing:border-box"></div>
<div class="a" style="left:1131.4px;top:691.5px;width:17.5px;height:17.5px;border:1.6px solid #6e9d90;box-sizing:border-box"></div>
<div class="a" style="left:1156.1px;top:691.5px;width:17.5px;height:17.5px;border:1.6px solid #e3d36e;box-sizing:border-box"></div>
<div class="a" style="left:1180.8px;top:691.5px;width:17.5px;height:17.5px;border:1.6px solid #e6975c;box-sizing:border-box"></div>
<div class="a" style="left:1205.5px;top:691.5px;width:17.5px;height:17.5px;border:1.6px solid #d86c75;box-sizing:border-box"></div>
<div class="a" style="left:777.6px;top:714.5px;width:200.7px;height:17.2px;border:1.7px solid #2d2d2d;box-sizing:border-box"></div>
<div class="a" style="left:994px;top:714.5px;width:47px;height:17.2px;border:1.7px solid #2d2d2d;box-sizing:border-box"></div>
<div class="t" style="left:786.89px;top:716.03px;font-size:13.08px;font-weight:400;color:#1d1d1d;transform:scaleX(0.9650);">TAKE OUT ALL HOUSE TRASH</div>
<div class="t" style="left:1010.59px;top:716.03px;font-size:13.08px;font-weight:400;color:#1d1d1d;transform:scaleX(0.9514);">20</div>
<div class="a" style="left:1057.3px;top:714.5px;width:17.5px;height:17.5px;border:1.6px solid #cf8cb0;box-sizing:border-box"></div>
<div class="a" style="left:1082.0px;top:714.5px;width:17.5px;height:17.5px;border:1.6px solid #4f7fb5;box-sizing:border-box"></div>
<div class="a" style="left:1106.7px;top:714.5px;width:17.5px;height:17.5px;border:1.6px solid #6fa2b2;box-sizing:border-box"></div>
<div class="a" style="left:1131.4px;top:714.5px;width:17.5px;height:17.5px;border:1.6px solid #6e9d90;box-sizing:border-box"></div>
<div class="a" style="left:1156.1px;top:714.5px;width:17.5px;height:17.5px;border:1.6px solid #e3d36e;box-sizing:border-box"></div>
<div class="a" style="left:1180.8px;top:714.5px;width:17.5px;height:17.5px;border:1.6px solid #e6975c;box-sizing:border-box"></div>
<div class="a" style="left:1205.5px;top:714.5px;width:17.5px;height:17.5px;border:1.6px solid #d86c75;box-sizing:border-box"></div>
<div class="a" style="left:777.6px;top:737.5px;width:200.7px;height:17.2px;border:1.7px solid #2d2d2d;box-sizing:border-box"></div>
<div class="a" style="left:994px;top:737.5px;width:47px;height:17.2px;border:1.7px solid #2d2d2d;box-sizing:border-box"></div>
<div class="t" style="left:818.71px;top:739.03px;font-size:13.08px;font-weight:400;color:#1d1d1d;transform:scaleX(0.9650);">CLEAN BATHROOM</div>
<div class="t" style="left:1010.59px;top:739.03px;font-size:13.08px;font-weight:400;color:#1d1d1d;transform:scaleX(0.9514);">20</div>
<div class="a" style="left:1057.3px;top:737.5px;width:17.5px;height:17.5px;border:1.6px solid #cf8cb0;box-sizing:border-box"></div>
<div class="a" style="left:1082.0px;top:737.5px;width:17.5px;height:17.5px;border:1.6px solid #4f7fb5;box-sizing:border-box"></div>
<div class="a" style="left:1106.7px;top:737.5px;width:17.5px;height:17.5px;border:1.6px solid #6fa2b2;box-sizing:border-box"></div>
<div class="a" style="left:1131.4px;top:737.5px;width:17.5px;height:17.5px;border:1.6px solid #6e9d90;box-sizing:border-box"></div>
<div class="a" style="left:1156.1px;top:737.5px;width:17.5px;height:17.5px;border:1.6px solid #e3d36e;box-sizing:border-box"></div>
<div class="a" style="left:1180.8px;top:737.5px;width:17.5px;height:17.5px;border:1.6px solid #e6975c;box-sizing:border-box"></div>
<div class="a" style="left:1205.5px;top:737.5px;width:17.5px;height:17.5px;border:1.6px solid #d86c75;box-sizing:border-box"></div>
<div class="a" style="left:777.6px;top:760.5px;width:200.7px;height:17.2px;border:1.7px solid #2d2d2d;box-sizing:border-box"></div>
<div class="a" style="left:994px;top:760.5px;width:47px;height:17.2px;border:1.7px solid #2d2d2d;box-sizing:border-box"></div>
<div class="t" style="left:827.70px;top:762.03px;font-size:13.08px;font-weight:400;color:#1d1d1d;transform:scaleX(0.9650);">CLEAN GARAGE</div>
<div class="t" style="left:1010.59px;top:762.03px;font-size:13.08px;font-weight:400;color:#1d1d1d;transform:scaleX(0.9514);">20</div>
<div class="a" style="left:1057.3px;top:760.5px;width:17.5px;height:17.5px;border:1.6px solid #cf8cb0;box-sizing:border-box"></div>
<div class="a" style="left:1082.0px;top:760.5px;width:17.5px;height:17.5px;border:1.6px solid #4f7fb5;box-sizing:border-box"></div>
<div class="a" style="left:1106.7px;top:760.5px;width:17.5px;height:17.5px;border:1.6px solid #6fa2b2;box-sizing:border-box"></div>
<div class="a" style="left:1131.4px;top:760.5px;width:17.5px;height:17.5px;border:1.6px solid #6e9d90;box-sizing:border-box"></div>
<div class="a" style="left:1156.1px;top:760.5px;width:17.5px;height:17.5px;border:1.6px solid #e3d36e;box-sizing:border-box"></div>
<div class="a" style="left:1180.8px;top:760.5px;width:17.5px;height:17.5px;border:1.6px solid #e6975c;box-sizing:border-box"></div>
<div class="a" style="left:1205.5px;top:760.5px;width:17.5px;height:17.5px;border:1.6px solid #d86c75;box-sizing:border-box"></div>
<div class="a" style="left:776.5px;top:815px;width:446.5px;height:8.5px;overflow:hidden">
<div class="a" style="left:0;top:0;width:446.5px;height:24px;background:linear-gradient(90deg,#1cb0d6 0%,#4bbdb8 25%,#75c59a 45%,#a8cb7c 65%,#d4d064 85%,#ecd357 100%);border-radius:7px"></div>
<div class="t" style="left:8.50px;top:4.19px;font-size:13.95px;font-weight:400;color:#15251f;transform:scaleX(0.8697);">TOTAL SCREEN TIME:</div>
<div class="t" style="left:198.50px;top:4.19px;font-size:13.95px;font-weight:400;color:#15251f;transform:scaleX(0.8896);">185 MINUTES</div>
</div>
<svg class="a" style="left:1063px;top:249px;" width="16" height="24" viewBox="0 0 16 24" fill="none"><path d="M2 1.5 V19 L6.3 15 L9.3 22 L12.3 20.7 L9.5 14 H15 Z" fill="#f4f4f4" stroke="#111" stroke-width="1.1" stroke-linejoin="round"/></svg>
<div class="a" style="left:375px;top:86px;width:1260px;height:50px;background:#efefef;border-radius:9px;box-shadow:0 4px 10px rgba(30,35,45,.15),0 0 1px rgba(40,40,50,.2)"></div>
<div class="a" style="left:380px;top:91px;width:180px;height:40px;border:1.2px solid #c9c9cb;border-radius:7px;box-sizing:border-box;background:#efefef"></div>
<div class="t" style="left:390.50px;top:101.74px;font-size:18.02px;font-weight:400;color:#0e1318;transform:scaleX(1.0211);-webkit-text-stroke:.35px #0e1318;">Now</div>
<div class="a" style="left:565.5px;top:91px;width:134.5px;height:40px;border:1.2px solid #c9c9cb;border-radius:7px;box-sizing:border-box"></div>
<div class="a" style="left:580px;top:110.2px;width:10px;height:1.8px;background:#0e1318"></div>
<div class="t" style="left:622.00px;top:101.74px;font-size:18.02px;font-weight:400;color:#0e1318;transform:scaleX(0.9797);-webkit-text-stroke:.35px #0e1318;">12</div>
<div class="a" style="left:673px;top:110.2px;width:11.6px;height:1.8px;background:#0e1318"></div>
<div class="a" style="left:677.9px;top:105.4px;width:1.8px;height:11.6px;background:#0e1318"></div>
<div class="a" style="left:705px;top:91px;width:40px;height:40px;background:#d9dadc;border-radius:7px"></div>
<svg class="a" style="left:715px;top:97px;" width="20" height="21" viewBox="0 0 20 21" fill="none"><path d="M2.5 18.5 L10 1.5 L17.5 18.5 M5.3 12.2 H14.7" stroke="#0e1318" stroke-width="1.9" stroke-linejoin="round"/></svg>
<div class="a" style="left:711px;top:119px;width:27px;height:5.5px;border-radius:3px;background:linear-gradient(90deg,#f3541f,#f6c11b 25%,#63d04a 50%,#1fc9e3 72%,#2f6ff0 100%)"></div>
<div class="t" style="left:763.50px;top:98.70px;font-size:23.98px;font-weight:700;color:#0e1318;transform:scaleX(0.7818);">B</div>
<svg class="a" style="left:806px;top:101px;" width="18" height="20" viewBox="0 0 18 20" fill="none"><path d="M7 1 H17 M1 19 H11 M12 1 L6 19" stroke="#a3a3a5" stroke-width="1.8"/></svg>
<svg class="a" style="left:850px;top:101px;" width="19" height="23" viewBox="0 0 19 23" fill="none"><path d="M3.5 1.5 V11.5 Q3.5 17.5 9.5 17.5 Q15.5 17.5 15.5 11.5 V1.5 M2 21.5 H17" stroke="#0e1318" stroke-width="1.9"/></svg>
<svg class="a" style="left:896px;top:101px;" width="19" height="20" viewBox="0 0 19 20" fill="none"><path d="M14.5 4.5 Q13 1.5 9 1.5 Q4 1.5 4 5.5 Q4 7.5 6 8.8 M5 15 Q6 18.5 9.8 18.5 Q14.8 18.5 14.8 14.5 Q14.8 12.5 13 11.2 M2.5 10 H16.5" stroke="#0e1318" stroke-width="1.9" stroke-linecap="round"/></svg>
<div class="a" style="left:930.5px;top:91.5px;width:39px;height:39px;background:#e2dbef;border-radius:7px"></div>
<div class="t" style="left:937.00px;top:103.24px;font-size:18.02px;font-weight:400;color:#6447c0;transform:scaleX(1.1776);-webkit-text-stroke:.2px #6447c0;">aA</div>
<svg class="a" style="left:982px;top:100px;" width="26" height="22" viewBox="0 0 26 22" fill="none"><path d="M2 3 H24 M6.5 8.5 H19.5 M2 14 H24 M6.5 19.5 H19.5" stroke="#0e1318" stroke-width="1.9" stroke-linecap="round"/></svg>
<svg class="a" style="left:1028px;top:100px;" width="24" height="22" viewBox="0 0 24 22" fill="none"><circle cx="3.2" cy="3.2" r="2.3" fill="#0e1318"/><circle cx="3.2" cy="11" r="2.3" fill="#0e1318"/><circle cx="3.2" cy="18.8" r="2.3" fill="#0e1318"/><path d="M9.5 3.2 H22 M9.5 11 H22 M9.5 18.8 H22" stroke="#0e1318" stroke-width="1.9" stroke-linecap="round"/></svg>
<svg class="a" style="left:1072px;top:100px;" width="26" height="22" viewBox="0 0 26 22" fill="none"><path d="M2 3.5 H12 M2 11 H12 M2 18.5 H12" stroke="#0e1318" stroke-width="1.9" stroke-linecap="round"/><path d="M19 1.5 V20.5 M15.5 5 L19 1.5 L22.5 5 M15.5 17 L19 20.5 L22.5 17" stroke="#0e1318" stroke-width="1.9" stroke-linecap="round" stroke-linejoin="round"/></svg>
<svg class="a" style="left:1116px;top:100px;" width="28" height="22" viewBox="0 0 28 22" fill="none"><path d="M1.5 20 L8 2.2 L14.5 20 M4 13.8 H12" stroke="#0e1318" stroke-width="1.9" stroke-linejoin="round"/><path d="M19.8 7.5 H26 M14.5 14.8 H20.8" stroke="#0e1318" stroke-width="1.7"/><circle cx="17.3" cy="7.5" r="2.5" fill="#efefef" stroke="#0e1318" stroke-width="1.7"/><circle cx="23.3" cy="14.8" r="2.5" fill="#efefef" stroke="#0e1318" stroke-width="1.7"/></svg>
<div class="a" style="left:1158.3px;top:102px;width:2px;height:18px;background:#d4d4d6;border-radius:1px"></div>
<svg class="a" style="left:1177px;top:98px;" width="26" height="26" viewBox="0 0 26 26" fill="none"><rect x="0.0" y="0.0" width="5.1" height="5.1" rx=".8" fill="#1b1b1b"/><rect x="10.2" y="0.0" width="5.1" height="5.1" rx=".8" fill="#8a8a8a"/><rect x="20.4" y="0.0" width="5.1" height="5.1" rx=".8" fill="#d8d8d8"/><rect x="5.1" y="5.1" width="5.1" height="5.1" rx=".8" fill="#555"/><rect x="15.3" y="5.1" width="5.1" height="5.1" rx=".8" fill="#bbb"/><rect x="0.0" y="10.2" width="5.1" height="5.1" rx=".8" fill="#1b1b1b"/><rect x="10.2" y="10.2" width="5.1" height="5.1" rx=".8" fill="#8a8a8a"/><rect x="20.4" y="10.2" width="5.1" height="5.1" rx=".8" fill="#d8d8d8"/><rect x="5.1" y="15.3" width="5.1" height="5.1" rx=".8" fill="#555"/><rect x="15.3" y="15.3" width="5.1" height="5.1" rx=".8" fill="#bbb"/><rect x="0.0" y="20.4" width="5.1" height="5.1" rx=".8" fill="#1b1b1b"/><rect x="10.2" y="20.4" width="5.1" height="5.1" rx=".8" fill="#8a8a8a"/><rect x="20.4" y="20.4" width="5.1" height="5.1" rx=".8" fill="#d8d8d8"/></svg>
<div class="a" style="left:1218.8px;top:102px;width:2px;height:18px;background:#d4d4d6;border-radius:1px"></div>
<div class="t" style="left:1240.80px;top:101.80px;font-size:18.31px;font-weight:400;color:#0e1318;transform:scaleX(1.0346);-webkit-text-stroke:.45px #0e1318;">Effects</div>
<div class="a" style="left:1318.3px;top:101.5px;width:2px;height:19px;background:#d4d4d6;border-radius:1px"></div>
<svg class="a" style="left:1335px;top:97px;" width="28" height="27" viewBox="0 0 28 27" fill="none"><circle cx="9.5" cy="17" r="8" stroke="#b9b9bb" stroke-width="1.8" fill="#efefef"/><circle cx="13" cy="14" r="8" stroke="#8f8f91" stroke-width="1.8" fill="#efefef"/><circle cx="17.5" cy="10.5" r="8.3" stroke="#0e1318" stroke-width="2" fill="#efefef"/></svg>
<div class="t" style="left:1369.60px;top:101.80px;font-size:18.31px;font-weight:400;color:#0e1318;transform:scaleX(1.0400);-webkit-text-stroke:.45px #0e1318;">Animate</div>
<div class="a" style="left:1459.8px;top:101.5px;width:2px;height:19px;background:#d4d4d6;border-radius:1px"></div>
<div class="t" style="left:1481.00px;top:101.80px;font-size:18.31px;font-weight:400;color:#0e1318;transform:scaleX(1.0491);-webkit-text-stroke:.45px #0e1318;">Position</div>
<div class="a" style="left:1568.8px;top:101.5px;width:2px;height:19px;background:#d4d4d6;border-radius:1px"></div>
<svg class="a" style="left:1588px;top:97px;" width="24" height="28" viewBox="0 0 24 28" fill="none"><rect x="1.5" y="1.5" width="21" height="7" rx="2" stroke="#0e1318" stroke-width="2"/><path d="M22 5 H23 V13 H12 V17" stroke="#0e1318" stroke-width="2"/><rect x="9" y="17" width="6" height="9.5" rx="2.5" stroke="#0e1318" stroke-width="2"/></svg>
<div class="a" style="left:85px;top:146.5px;width:450px;height:666.5px;background:#eeeeee;border-radius:16px 0 0 16px;box-shadow:0 5px 14px rgba(40,45,60,.20),0 0 1px rgba(40,45,60,.25)"></div>
<div class="t" style="left:105.60px;top:172.62px;font-size:18.17px;font-weight:700;color:#0e1318;transform:scaleX(0.9756);">Text color</div>
<svg class="a" style="left:470px;top:170px;" width="22" height="22" viewBox="0 0 22 22" fill="none"><path d="M3 3 L19 19 M19 3 L3 19" stroke="#0e1318" stroke-width="2" stroke-linecap="round"/></svg>
<div class="a" style="left:105px;top:216.5px;width:391px;height:49px;border:1.2px solid #cacacc;border-radius:8px;box-sizing:border-box"></div>
<svg class="a" style="left:117px;top:228px;" width="26" height="26" viewBox="0 0 26 26" fill="none"><circle cx="10.5" cy="10.5" r="8" stroke="#0e1318" stroke-width="2"/><path d="M16.3 16.3 L23 23" stroke="#0e1318" stroke-width="2.4" stroke-linecap="round"/></svg>
<div class="t" style="left:156.00px;top:231.26px;font-size:19.19px;font-weight:400;color:#878b90;transform:scaleX(1.0367);">Try “blue” or “#00c4cc”</div>
<svg class="a" style="left:518px;top:151px;" width="15" height="12" viewBox="0 0 15 12" fill="none"><path d="M1.5 10 L7.5 2 L13.5 10 Z" fill="#8d8d8f"/></svg>
<div class="a" style="left:520px;top:169.5px;width:11px;height:172px;background:#8c8c8e;border-radius:6px"></div>
<svg class="a" style="left:518px;top:798px;" width="15" height="12" viewBox="0 0 15 12" fill="none"><path d="M1.5 2 L7.5 10 L13.5 2 Z" fill="#8d8d8f"/></svg>
<svg class="a" style="left:108px;top:292px;" width="28" height="29" viewBox="0 0 28 29" fill="none"><path d="M11 26.5 H4 Q2.5 26.5 2.5 25 V10 L9 3 H17 Q18.5 3 18.5 4.5 V11 M9 3 V8.5 Q9 10 7.5 10 H2.5" stroke="#0e1318" stroke-width="1.8" stroke-linejoin="round" stroke-linecap="round"/><path d="M19.5 26 Q12 26 12 19 Q12 12 19 12 Q26 12 26 18.5 Q26 21 23.5 21 Q21.5 21 21.5 23 Q21.5 26 19.5 26 Z" stroke="#0e1318" stroke-width="1.8" stroke-linejoin="round"/><circle cx="17" cy="16.5" r="1.2" fill="#0e1318"/><circle cx="21" cy="16" r="1.2" fill="#0e1318"/><circle cx="16" cy="20.5" r="1.2" fill="#0e1318"/></svg>
<div class="t" style="left:146.20px;top:297.01px;font-size:18.90px;font-weight:700;color:#0e1318;transform:scaleX(0.9419);">Document colors</div>
<div class="a" style="left:85px;top:146px;width:450px;height:667px;overflow:hidden;border-radius:0 0 0 16px"><svg width="450" height="667" style="position:absolute;left:0;top:0"><defs><linearGradient id="wheel" x1="0" y1="0" x2="1" y2="1"><stop offset="0" stop-color="#2a5bff"/><stop offset=".5" stop-color="#f0f"/><stop offset="1" stop-color="#f33"/></linearGradient></defs><circle cx="48.50" cy="223.00" r="21.5" fill="none" stroke="url(#wheel)" stroke-width="14"/><circle cx="48.50" cy="223.00" r="15" fill="#f2f2f2"/><path d="M40.50 223.00 H56.50 M48.50 215.00 V231.00" stroke="#111" stroke-width="2"/><circle cx="115.25" cy="223.00" r="26.6" fill="none" stroke="#8847d8" stroke-width="3.4"/><circle cx="115.25" cy="223.00" r="23.5" fill="#131313"/><circle cx="182.00" cy="223.00" r="28.4" fill="#1454a9"/><circle cx="248.75" cy="223.00" r="28.4" fill="#13b26a"/><circle cx="315.50" cy="223.00" r="28.4" fill="#121212"/><circle cx="382.25" cy="223.00" r="28.4" fill="#1f2e5c"/><circle cx="48.50" cy="289.75" r="28.4" fill="#232323"/><circle cx="115.25" cy="289.75" r="28.4" fill="#274e56"/><circle cx="182.00" cy="289.75" r="28.4" fill="#246a62"/><circle cx="248.75" cy="289.75" r="28.4" fill="#2e6aa0"/><circle cx="315.50" cy="289.75" r="28.4" fill="#323232"/><circle cx="382.25" cy="289.75" r="28.4" fill="#30428a"/><circle cx="48.50" cy="356.50" r="28.4" fill="#2f3f8a"/><circle cx="115.25" cy="356.50" r="28.4" fill="#2f3f88"/><circle cx="182.00" cy="356.50" r="28.4" fill="#33aed6"/><circle cx="248.75" cy="356.50" r="28.4" fill="#33afd8"/><circle cx="315.50" cy="356.50" r="28.4" fill="#323b8b"/><circle cx="382.25" cy="356.50" r="28.4" fill="#3a2b16"/><circle cx="48.50" cy="423.25" r="28.4" fill="#393d3f"/><circle cx="115.25" cy="423.25" r="28.4" fill="#3a8593"/><circle cx="182.00" cy="423.25" r="28.4" fill="#41acea"/><circle cx="248.75" cy="423.25" r="28.4" fill="#463937"/><circle cx="315.50" cy="423.25" r="28.4" fill="#4a8a6a"/><circle cx="382.25" cy="423.25" r="28.4" fill="#5a77ee"/><circle cx="48.50" cy="490.00" r="28.4" fill="#5a629c"/><circle cx="115.25" cy="490.00" r="28.4" fill="#59629c"/><circle cx="182.00" cy="490.00" r="28.4" fill="#5e103c"/><circle cx="248.75" cy="490.00" r="28.4" fill="#66a5a7"/><circle cx="315.50" cy="490.00" r="28.4" fill="#733b10"/><circle cx="382.25" cy="490.00" r="28.4" fill="#737575"/><circle cx="48.50" cy="556.75" r="28.4" fill="#74c4c3"/><circle cx="115.25" cy="556.75" r="28.4" fill="#7ccd5a"/><circle cx="182.00" cy="556.75" r="28.4" fill="#7e8687"/><circle cx="248.75" cy="556.75" r="28.4" fill="#8c58ec"/><circle cx="315.50" cy="556.75" r="28.4" fill="#8bbde0"/><circle cx="382.25" cy="556.75" r="28.4" fill="#8f8782"/><circle cx="48.50" cy="623.50" r="28.4" fill="#9a5330"/><circle cx="115.25" cy="623.50" r="28.4" fill="#a07a32"/><circle cx="182.00" cy="623.50" r="28.4" fill="#a0bd62"/><circle cx="248.75" cy="623.50" r="28.4" fill="#a7b860"/><circle cx="315.50" cy="623.50" r="28.4" fill="#a95211"/><circle cx="382.25" cy="623.50" r="28.4" fill="#a83f87"/><circle cx="48.50" cy="690.25" r="28.4" fill="#9dbcb6"/><circle cx="115.25" cy="690.25" r="28.4" fill="#a27d36"/><circle cx="182.00" cy="690.25" r="28.4" fill="#a8cf9e"/><circle cx="248.75" cy="690.25" r="28.4" fill="#a9d3d8"/><circle cx="315.50" cy="690.25" r="28.4" fill="#a9c0db"/><circle cx="382.25" cy="690.25" r="28.4" fill="#aad2ea"/></svg></div>
<div class="a" style="left:105px;top:340.5px;width:57px;height:57px;border-radius:50%;background:conic-gradient(from 0deg,#f0f 0deg,#f33 70deg,#f90 110deg,#ee3 150deg,#5e2 200deg,#2ee 250deg,#36f 300deg,#a2f 330deg,#f0f 360deg)"></div>
<div class="a" style="left:118.5px;top:354px;width:30px;height:30px;border-radius:50%;background:#f1f1f1"></div>
<svg class="a" style="left:123.5px;top:359px;" width="20" height="20" viewBox="0 0 20 20" fill="none"><path d="M2 10 H18 M10 2 V18" stroke="#111" stroke-width="2"/></svg>
<div class="a" style="left:0px;top:874.2px;width:1610px;height:1.8px;background:#606063"></div>
<svg class="a" style="left:103px;top:839px;" width="26" height="21" viewBox="0 0 26 21" fill="none"><path d="M2.5 3 H17 M2.5 8 H15 M2.5 13 H9 M2.5 18 H5" stroke="#0e1318" stroke-width="1.9" stroke-linecap="round"/><path d="M11 19.5 L12 15.5 L21 6.5 Q22.5 5.2 24 6.5 Q25.3 8 24 9.5 L15 18.5 Z" stroke="#0e1318" stroke-width="1.8" stroke-linejoin="round"/></svg>
<div class="t" style="left:135.90px;top:839.33px;font-size:18.75px;font-weight:400;color:#0e1318;-webkit-text-stroke:.6px #0e1318;">Notes</div>
<div class="a" style="left:1202.5px;top:847.5px;width:106px;height:3px;background:#a6a8ab;border-radius:2px"></div>
<div class="a" style="left:1308px;top:847.5px;width:143.5px;height:3px;background:#c9cbce;border-radius:2px"></div>
<div class="a" style="left:1296.5px;top:837.5px;width:23px;height:23px;border-radius:50%;background:#ededef;box-shadow:0 1px 3px rgba(0,0,0,.25),0 0 0 .5px rgba(0,0,0,.1)"></div>
<div class="t" style="left:1485.30px;top:839.25px;font-size:18.60px;font-weight:400;color:#0e1318;transform:scaleX(0.9594);-webkit-text-stroke:.6px #0e1318;">51%</div>
<div class="a" style="left:1554px;top:840px;width:1.6px;height:19px;background:#cfd0d2"></div>
<svg class="a" style="left:1573px;top:836px;" width="27" height="26" viewBox="0 0 27 26" fill="none"><rect x="2" y="2" width="22" height="13" rx="1" stroke="#0e1318" stroke-width="2"/><rect x="2" y="18.5" width="5.5" height="5" rx=".5" stroke="#0e1318" stroke-width="1.8"/><rect x="10.2" y="18.5" width="5.5" height="5" rx=".5" stroke="#0e1318" stroke-width="1.8"/><rect x="18.5" y="18.5" width="5.5" height="5" rx=".5" stroke="#0e1318" stroke-width="1.8"/></svg>
<div class="a" style="left:1605px;top:841px;width:5px;height:17px;background:#0e1318;border-radius:1px"></div>
</body></html>
